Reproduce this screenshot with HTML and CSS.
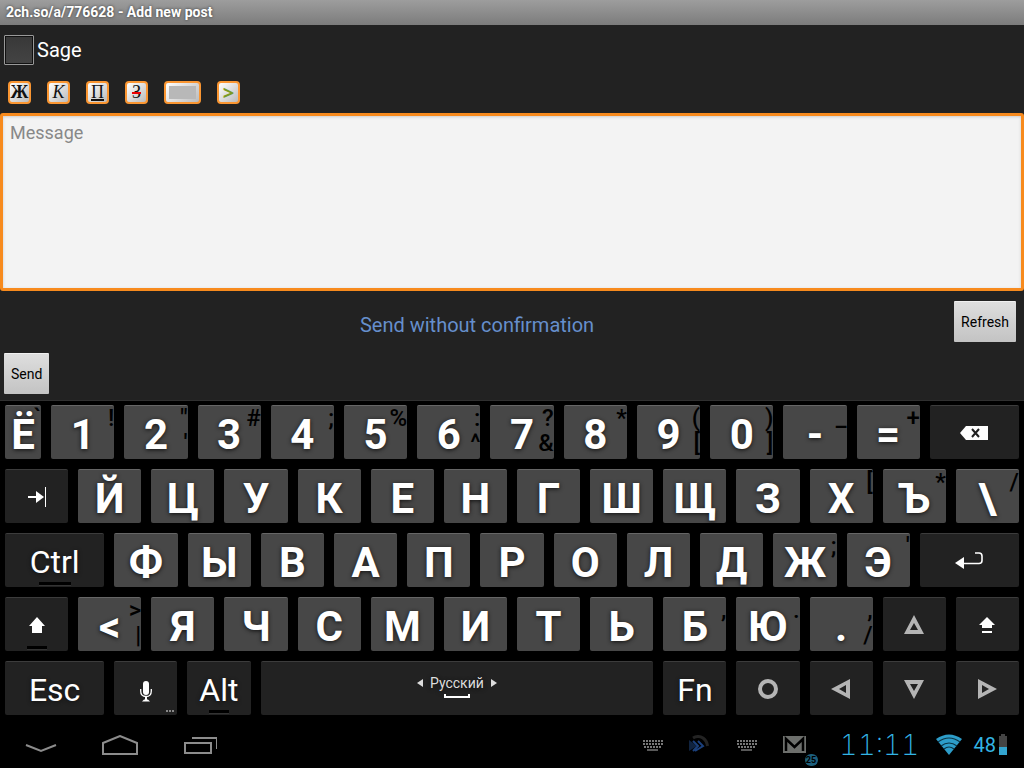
FILE: index.html
```
<!DOCTYPE html>
<html lang="ru">

<head>
    <meta charset="UTF-8">
    <meta name="viewport" content="width=device-width, initial-scale=1.0">
    <title>Add new post</title>
    <link rel="stylesheet" href="styles.css">
</head>

<body>
    <h1 class="title">2ch.so/a/776628 - Add new post</h1>
    <form class="post">
        <label class="sage"><input type="checkbox" name="sage">Sage</label>
        <div class="tools">
            <button type="button" class="tool bold">Ж</button>
            <button type="button" class="tool italic">К</button>
            <button type="button" class="tool under">П</button>
            <button type="button" class="tool strike">З</button>
            <button type="button" class="tool spoiler" aria-label="Spoiler"><span></span></button>
            <button type="button" class="tool quote">&gt;</button>
        </div>
        <textarea class="message" placeholder="Message" aria-label="Message"></textarea>
        <div class="captcha">
            <div class="notice">Send without confirmation</div>
            <button type="button" class="btn">Refresh</button>
        </div>
        <button type="button" class="btn send">Send</button>
    </form>

    <div class="keyboard">
        <div class="row">
            <button class="key small">Ё<span class="hint">`</span></button>
            <button class="key">1<span class="hint">!</span></button>
            <button class="key">2<span class="hint">"<br>'</span></button>
            <button class="key">3<span class="hint">#</span></button>
            <button class="key">4<span class="hint">;</span></button>
            <button class="key">5<span class="hint">%</span></button>
            <button class="key">6<span class="hint">:<br>^</span></button>
            <button class="key">7<span class="hint">?<br>&amp;</span></button>
            <button class="key">8<span class="hint">*</span></button>
            <button class="key">9<span class="hint">(<br>[</span></button>
            <button class="key">0<span class="hint">)<br>]</span></button>
            <button class="key">-<span class="hint">_</span></button>
            <button class="key">=<span class="hint">+</span></button>
            <button class="key dark icon back" aria-label="Backspace">
                <svg width="28" height="14" viewBox="0 0 28 14"><path d="M0 7L6 0H28V14H6Z" fill="#fff"/><path d="M12 3L19 11M19 3L12 11" stroke="#222" stroke-width="2"/></svg>
            </button>
        </div>
        <div class="row">
            <button class="key dark icon" aria-label="Tab">
                <svg width="20" height="20" viewBox="0 0 20 20"><path d="M1 10H10" stroke="#fff" stroke-width="2"/><path d="M9 4L17 10L9 16Z" fill="#fff"/><path d="M18.500 0V20" stroke="#fff"/></svg>
            </button>
            <button class="key">Й</button>
            <button class="key">Ц</button>
            <button class="key">У</button>
            <button class="key">К</button>
            <button class="key">Е</button>
            <button class="key">Н</button>
            <button class="key">Г</button>
            <button class="key">Ш</button>
            <button class="key">Щ</button>
            <button class="key">З</button>
            <button class="key">Х<span class="hint">[</span></button>
            <button class="key">Ъ<span class="hint">*</span></button>
            <button class="key">\<span class="hint">/</span></button>
        </div>
        <div class="row">
            <button class="key dark wide lock">Ctrl</button>
            <button class="key">Ф</button>
            <button class="key">Ы</button>
            <button class="key">В</button>
            <button class="key">А</button>
            <button class="key">П</button>
            <button class="key">Р</button>
            <button class="key">О</button>
            <button class="key">Л</button>
            <button class="key">Д</button>
            <button class="key">Ж<span class="hint">;</span></button>
            <button class="key">Э<span class="hint">'</span></button>
            <button class="key dark icon wide" aria-label="Enter">
                <svg width="28" height="18" viewBox="0 0 28 18"><path d="M0 11L9 5V17Z" fill="#fff"/><path d="M8 11.500H24Q27 11.500 27 8.500V4Q27 1 24 1H20" fill="none" stroke="#fff" stroke-width="1.600"/></svg>
            </button>
        </div>
        <div class="row">
            <button class="key dark icon lock" aria-label="Shift">
                <svg width="18" height="18" viewBox="0 0 18 18"><path d="M9 1L17 10H14V17H4V10H1Z" fill="#fff"/></svg>
            </button>
            <button class="key">&lt;<span class="hint">&gt;<br>|</span></button>
            <button class="key">Я</button>
            <button class="key">Ч</button>
            <button class="key">С</button>
            <button class="key">М</button>
            <button class="key">И</button>
            <button class="key">Т</button>
            <button class="key">Ь</button>
            <button class="key">Б<span class="hint">,</span></button>
            <button class="key">Ю<span class="hint">.</span></button>
            <button class="key">.<span class="hint">,<br>/</span></button>
            <button class="key dark icon" aria-label="Up">
                <svg width="20" height="20" viewBox="0 0 20 20"><path d="M10 0L20 19H0ZM10 8L6 15H14Z" class="arrow"/></svg>
            </button>
            <button class="key dark icon" aria-label="Caps lock">
                <svg width="18" height="18" viewBox="0 0 18 18"><path d="M9 1L17 9H14V12H4V9H1ZM4 15H14V17H4Z" fill="#fff"/></svg>
            </button>
        </div>
        <div class="row">
            <button class="key dark wide">Esc</button>
            <button class="key dark icon mic" aria-label="Voice input">
                <svg width="12" height="22" viewBox="0 0 12 22"><rect x="3" y="0" width="6" height="14" rx="3" fill="#fff"/><path d="M.700 8V10Q.700 15.500 6 15.500T11.300 10V8" fill="none" stroke="#fff" stroke-width="1.300"/><path d="M6 15V19" stroke="#fff" stroke-width="2"/><path d="M2 20.500L4 18.500H8L10 20.500Z" fill="#fff"/></svg>
                <svg class="more" width="9" height="3" viewBox="0 0 9 3"><path d="M0 0H2V2H0ZM3 0H5V2H3ZM6 0H8V2H6Z" fill="#888"/></svg>
            </button>
            <button class="key dark lock">Alt</button>
            <button class="key dark icon space">
                <span class="lang">
                    <svg width="6" height="8" viewBox="0 0 6 8"><path d="M6 0V8L0 4Z" fill="#ddd"/></svg>
                    Русский
                    <svg width="6" height="8" viewBox="0 0 6 8"><path d="M0 0V8L6 4Z" fill="#ddd"/></svg>
                </span>
                <svg width="26" height="5" viewBox="0 0 26 5"><path d="M1 0V3H25V0" fill="none" stroke="#fff" stroke-width="2"/></svg>
            </button>
            <button class="key dark">Fn</button>
            <button class="key dark icon" aria-label="Center">
                <svg width="20" height="20" viewBox="0 0 20 20"><path d="M10 0A10 10 0 0 1 10 20A10 10 0 0 1 10 0ZM10 4A6 6 0 0 0 10 16A6 6 0 0 0 10 4Z" class="arrow"/></svg>
            </button>
            <button class="key dark icon" aria-label="Left">
                <svg width="20" height="20" viewBox="0 0 20 20"><path d="M0 10L19 0V20ZM8 10L15 14V6Z" class="arrow"/></svg>
            </button>
            <button class="key dark icon" aria-label="Down">
                <svg width="20" height="20" viewBox="0 0 20 20"><path d="M10 20L20 1H0ZM10 12L6 5H14Z" class="arrow"/></svg>
            </button>
            <button class="key dark icon" aria-label="Right">
                <svg width="20" height="20" viewBox="0 0 20 20"><path d="M20 10L1 0V20ZM12 10L5 14V6Z" class="arrow"/></svg>
            </button>
        </div>
    </div>

    <div class="navbar">
        <div class="nav">
            <button aria-label="Hide keyboard"><svg width="36" height="20" viewBox="0 0 36 20"><path d="M3 10L18 16L33 10" /></svg></button>
            <button aria-label="Home"><svg width="36" height="20" viewBox="0 0 36 20"><path d="M1 19V8L18 1L35 8V19Z"/></svg></button>
            <button aria-label="Recent apps"><svg width="36" height="20" viewBox="0 0 36 20"><path d="M4 8H30V18H4ZM11 3H36V14"/></svg></button>
        </div>
        <div class="tray">
            <svg width="20" height="12" viewBox="0 0 20 12"><path d="M0 2H20M0 5H20M1 8H19" stroke="#777" stroke-width="2" stroke-dasharray="2 1"/><path d="M4 11H15" stroke="#777" stroke-width="1.500"/></svg>
            <svg width="22" height="20" viewBox="0 0 22 20"><path d="M4 3Q9 0 14 3Q18 6 18.500 11" fill="none" stroke="#232323" stroke-width="3"/><path d="M0 5L8 11L0 16Z" fill="#10233f"/><path d="M4 6L9 11L4 16M9 6L14 11L6 16" fill="none" stroke="#1b407c" stroke-width="2"/></svg>
            <svg width="20" height="12" viewBox="0 0 20 12"><path d="M0 2H20M0 5H20M1 8H19" stroke="#777" stroke-width="2" stroke-dasharray="2 1"/><path d="M4 11H15" stroke="#777" stroke-width="1.500"/></svg>
            <div class="mail">
                <svg width="23" height="17" viewBox="0 0 23 17"><path d="M0 0H23V17H0Z" fill="#6d6f6c"/><path d="M3 15V3L11.500 11L20 3V15" fill="none" stroke="#000" stroke-width="2.500"/></svg>
                <span class="badge">25</span>
            </div>
            <span class="clock">11:11</span>
            <svg width="26" height="21" viewBox="0 0 26 21"><path d="M0 5Q13 -4 26 5L13 21Z" fill="#2d9dc9"/><path d="M2 8Q13 0 24 8M5 12Q13 6 21 12M8 15Q13 11 18 15" fill="none" stroke="#0b3444" stroke-width="1.200"/></svg>
            <span class="level">48</span>
            <svg width="8" height="21" viewBox="0 0 8 21"><path d="M2 0H6V2H8V13H0V2H2Z" fill="#444"/><path d="M0 13H8V21H0Z" fill="#33a5d0"/></svg>
        </div>
    </div>
</body>

</html>
```
FILE: styles.css
```
* {
    padding: 0;
    margin: 0;
    box-sizing: border-box;
}

body {
    background-color: #000;
    color: #fff;
    font-family: Roboto, "Noto Sans", sans-serif;
}

button {
    border: none;
    font-family: inherit;
    cursor: pointer;
}

svg {
    display: block;
    flex: none;
}

.title {
    height: 25px;
    padding-left: 6px;
    background: linear-gradient(#9d9d9d, #7c7c7c);
    font-size: 14px;
    line-height: 25px;
    text-shadow: 0 0 3px #333;
}

/* post form */
.post {
    display: flex;
    flex-direction: column;
    align-items: flex-start;
    background-color: #222;
    padding-bottom: 6px;
}

.sage {
    display: flex;
    align-items: center;
    gap: 3px;
    padding: 10px 4px;
    height: 50px;
    font-size: 20px;
}

.sage input {
    appearance: none;
    width: 30px;
    height: 30px;
    border: 1px solid #999;
    border-radius: 1px;
    background: linear-gradient(#383838, #444);
    box-shadow: inset 0 0 0 1px #111;
}

.tools {
    display: flex;
    gap: 16px;
    padding: 6px 8px 9px;
}

.tool {
    display: flex;
    align-items: center;
    justify-content: center;
    width: 23px;
    height: 23px;
    border: 2px solid #fa9632;
    border-radius: 4px;
    background: linear-gradient(135deg, #fff, #bbb);
    color: #111;
    font-family: "Liberation Serif", serif;
    font-size: 18px;
    line-height: 19px;
}

.bold {
    font-weight: bold;
}

.italic {
    font-style: italic;
}

.under {
    text-decoration: underline 2px;
}

.strike {
    text-decoration: line-through 2px #e00;
}

.spoiler {
    width: 37px;
}

.spoiler span {
    width: 27px;
    height: 13px;
    background-color: #b8b8b8;
}

.quote {
    color: #7a9a24;
    font-family: "Open Sans", sans-serif;
    font-size: 20px;
    font-weight: bold;
}

.message {
    display: block;
    width: 100%;
    height: 178px;
    padding: 6px 7px;
    border: 3px solid #f78a1d;
    border-radius: 3px;
    outline: none;
    resize: none;
    background-color: #f3f3f3;
    box-shadow: inset 0 1px 3px #ccc;
    font-family: inherit;
    font-size: 18px;
    line-height: 22px;
}

.message::placeholder {
    color: #888;
}

.captcha {
    display: flex;
    align-items: center;
    width: 100%;
    padding: 10px 8px 11px 0;
}

.notice {
    flex: 1;
    padding-top: 6px;
    color: #668fcc;
    font-size: 20px;
    text-align: center;
}

.btn {
    height: 41px;
    padding: 0 7px;
    border-top: 1px solid #f0f0f0;
    border-radius: 1px;
    background: linear-gradient(#dedede, #c3c3c3);
    color: #000;
    font-size: 14px;
}

.send {
    margin-left: 4px;
}

/* keyboard */
.keyboard {
    display: flex;
    flex-direction: column;
    gap: 10px;
    padding: 4px 5px 6px;
    border-top: 1px solid #303030;
}

.row {
    display: flex;
    gap: 10px;
}

.key {
    position: relative;
    display: flex;
    align-items: center;
    justify-content: center;
    flex: 63 1 0;
    min-width: 0;
    height: 54px;
    padding-top: 5px;
    border-top: 1px solid #666;
    border-radius: 2px;
    background-color: #474747;
    color: #fff;
    font-size: 42px;
    font-weight: bold;
    line-height: 48px;
    text-shadow: 0 1px 4px #111;
    overflow: hidden;
}

.dark {
    padding-top: 3px;
    border-top-color: #3c3c3c;
    background-color: #222;
    font-size: 32px;
    font-weight: normal;
}

.icon {
    padding-top: 0;
}

.small {
    flex-grow: 36;
}

.back {
    flex-grow: 89;
}

.wide {
    flex-grow: 99;
}

.mic {
    padding-top: 6px;
}

.space {
    flex-grow: 392;
    flex-direction: column;
    gap: 3px;
    padding-bottom: 3px;
}

.hint {
    position: absolute;
    top: 0;
    right: 0;
    color: #000;
    font-size: 24px;
    font-weight: 500;
    line-height: 25px;
    text-align: right;
    text-shadow: none;
}

/* bar under the keys that can be locked */
.lock::after {
    content: "";
    position: absolute;
    bottom: 1px;
    left: calc(50% - 10px);
    width: 20px;
    height: 3px;
    background-color: #000;
    border-bottom: 1px solid #333;
}

.wide.lock::after {
    left: calc(50% - 16px);
    width: 32px;
}

.arrow {
    fill: #b4b4b4;
    fill-rule: evenodd;
}

.more {
    position: absolute;
    right: 2px;
    bottom: 2px;
}

.lang {
    display: flex;
    align-items: center;
    gap: 7px;
    color: #ddd;
    font-size: 14px;
    line-height: 16px;
}

/* system bar */
.navbar {
    display: flex;
    align-items: center;
    justify-content: space-between;
    height: 47px;
    padding: 0 17px 0 23px;
}

.nav {
    display: flex;
    gap: 43px;
}

.nav button {
    background: none;
}

.nav path {
    fill: none;
    stroke: #8c8c8c;
    stroke-width: 2;
}

.tray {
    display: flex;
    align-items: center;
    gap: 26px;
    color: #33b5e5;
}

.mail {
    position: relative;
}

.badge {
    position: absolute;
    top: 18px;
    left: 22px;
    width: 13px;
    height: 12px;
    border-radius: 6px;
    background-color: #1d5f7c;
    color: #000;
    font-size: 9px;
    font-weight: bold;
    line-height: 12px;
    text-align: center;
}

.clock {
    width: 96px;
    margin-right: -18px;
    font-family: Inter, sans-serif;
    font-size: 28px;
    font-weight: 200;
    font-variant-numeric: tabular-nums;
    line-height: 32px;
    text-align: center;
}

.level {
    margin: 0 -23px 0 -14px;
    font-size: 20px;
}
```
